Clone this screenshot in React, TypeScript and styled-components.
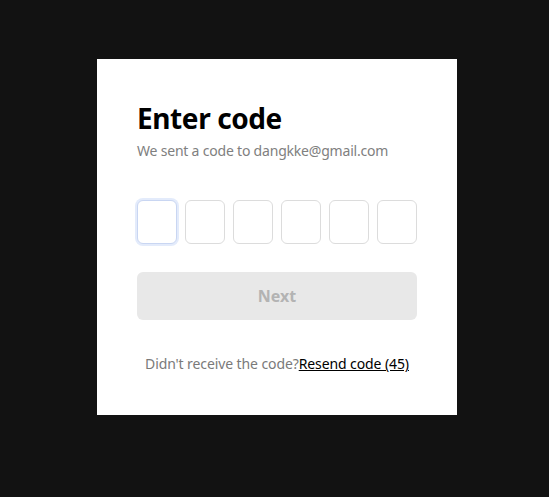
import React from "react";
import styled, { createGlobalStyle } from "styled-components";

const Global = createGlobalStyle`
  html, body { margin: 0; padding: 0; background: #121212; }
  body { font-family: "Noto Sans", "Open Sans", sans-serif; }
  * { box-sizing: border-box; }
`;

const Page = styled.div`
  width: 549px;
  height: 497px;
  padding: 59px 0 0 97px;
`;

const Card = styled.div`
  width: 360px;
  height: 356px;
  background: #ffffff;
  padding: 40px;
  display: flex;
  flex-direction: column;
`;

const Title = styled.h1`
  margin: 0;
  font-size: 28px;
  line-height: 38px;
  font-weight: 700;
  letter-spacing: -0.4px;
  color: #000;
`;

const Subtitle = styled.p`
  margin: 4px 0 0;
  font-size: 14px;
  line-height: 20px;
  letter-spacing: -0.2px;
  color: #808080;
`;

const CodeRow = styled.div`
  display: flex;
  gap: 8px;
  margin-top: 39px;
`;

const CodeBox = styled.input<{ $focused?: boolean }>`
  width: 40px;
  height: 44px;
  border-radius: 6px;
  border: 1px solid ${(p) => (p.$focused ? "#c9d6f2" : "#dcdcdc")};
  box-shadow: ${(p) => (p.$focused ? "0 0 0 2px #e3ebfb" : "none")};
  background: #fff;
  outline: none;
  padding: 0;
  text-align: center;
  font-size: 18px;
`;

const NextButton = styled.button`
  margin-top: 28px;
  height: 48px;
  width: 100%;
  border: none;
  border-radius: 6px;
  background: #e8e8e8;
  color: #b3b3b3;
  font-family: inherit;
  font-size: 16px;
  font-weight: 700;
`;

const Footer = styled.p`
  margin: 34px 0 0;
  text-align: center;
  font-size: 14px;
  line-height: 20px;
  letter-spacing: -0.1px;
  color: #7a7a7a;
`;

const ResendLink = styled.a`
  color: #000;
  text-decoration: underline;
`;

export default function App() {
  return (
    <>
      <Global />
      <Page>
        <Card>
          <Title>Enter code</Title>
          <Subtitle>We sent a code to dangkke@gmail.com</Subtitle>
          <CodeRow>
            {[0, 1, 2, 3, 4, 5].map((i) => (
              <CodeBox key={i} $focused={i === 0} maxLength={1} />
            ))}
          </CodeRow>
          <NextButton disabled>Next</NextButton>
          <Footer>
            Didn't receive the code?<ResendLink href="#">Resend code (45)</ResendLink>
          </Footer>
        </Card>
      </Page>
    </>
  );
}
